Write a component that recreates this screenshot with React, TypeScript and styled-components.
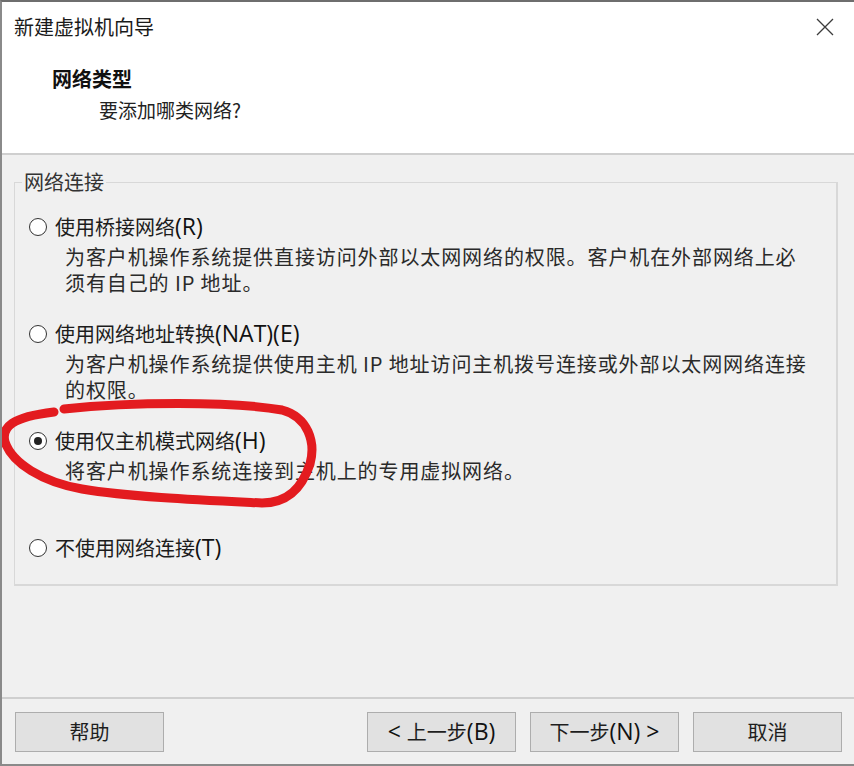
import styled, { createGlobalStyle } from 'styled-components';

type NetOption = {
  label: string;
  lines: string[];
  checked?: boolean;
};

const options: NetOption[] = [
  {
    label: '使用桥接网络(R)',
    lines: [
      '为客户机操作系统提供直接访问外部以太网网络的权限。客户机在外部网络上必',
      '须有自己的 IP 地址。',
    ],
  },
  {
    label: '使用网络地址转换(NAT)(E)',
    lines: [
      '为客户机操作系统提供使用主机 IP 地址访问主机拨号连接或外部以太网网络连接',
      '的权限。',
    ],
  },
  {
    label: '使用仅主机模式网络(H)',
    lines: ['将客户机操作系统连接到主机上的专用虚拟网络。'],
    checked: true,
  },
  { label: '不使用网络连接(T)', lines: [] },
];

// latin runs render a bit larger than the CJK glyphs (Segoe-like mix)
const mixed = (text: string) =>
  text.split(/([\x20-\x7e]+)/).map((part, i) =>
    /[\x20-\x7e]/.test(part) ? <Latin key={i}>{part}</Latin> : part
  );

const App = () => {
  return (
    <>
      <GlobalStyle />
      <Window>
        <Header>
          <TitleBar>
            <Title>新建虚拟机向导</Title>
            <CloseButton>
              <svg width="18" height="18" viewBox="0 0 18 18">
                <path d="M1 1 L17 17 M17 1 L1 17" stroke="#3c3c3c" strokeWidth="1.3" />
              </svg>
            </CloseButton>
          </TitleBar>
          <HeaderText>
            <Heading>网络类型</Heading>
            <SubHeading>要添加哪类网络?</SubHeading>
          </HeaderText>
        </Header>

        <Body>
          <Group>
            <Legend>网络连接</Legend>
            <OptionList>
              {options.map((opt) => (
                <Option key={opt.label}>
                  <OptionLabel>
                    <Radio $checked={!!opt.checked} />
                    <span>{mixed(opt.label)}</span>
                  </OptionLabel>
                  {opt.lines.length > 0 && (
                    <Description>
                      {opt.lines.map((line) => (
                        <DescLine key={line}>{line}</DescLine>
                      ))}
                    </Description>
                  )}
                </Option>
              ))}
            </OptionList>
          </Group>
        </Body>

        <Footer>
          <Button>帮助</Button>
          <Spacer />
          <Button>{mixed('< ')}上一步{mixed('(B)')}</Button>
          <Button>下一步{mixed('(N) >')}</Button>
          <Button>取消</Button>
        </Footer>

        <Annotation width="854" height="766" viewBox="0 0 854 766">
          <path
            d="M64 409 C 130 402, 230 401, 282 410 C 308 417, 316 442, 310 464 C 302 488, 288 503, 262 503 C 200 500, 130 497, 82 489 C 42 482, 12 463, 5 442 C 1 427, 12 417, 54 412"
            fill="none"
            stroke="#e31b1f"
            strokeWidth="9"
            strokeLinecap="round"
          />
        </Annotation>
      </Window>
    </>
  );
};

export default App;

const GlobalStyle = createGlobalStyle`
  body {
    margin: 0;
    background: #f0f0f0;
  }
  * {
    box-sizing: border-box;
  }
`;

const Window = styled.div`
  position: relative;
  display: flex;
  flex-direction: column;
  width: 854px;
  height: 766px;
  background: #f0f0f0;
  border-top: 2px solid #6e6e6e;
  border-left: 2px solid #8a8a8a;
  border-bottom: 2px solid #8a8a8a;
  font-family: "Noto Sans", "Noto Sans CJK SC", sans-serif;
  color: #1e1e1e;
  overflow: hidden;
`;

const Header = styled.div`
  height: 153px;
  background: #ffffff;
  border-bottom: 2px solid #cfcfcf;
`;

const TitleBar = styled.div`
  display: flex;
  align-items: center;
  justify-content: space-between;
  height: 50px;
  padding: 0 19px 0 12px;
`;

const Title = styled.div`
  font-family: "Noto Sans CJK SC", sans-serif;
  font-size: 20px;
  line-height: 30px;
  color: #1a1a1a;
`;

const CloseButton = styled.div`
  display: flex;
  align-items: center;
  justify-content: center;
  width: 20px;
  height: 20px;
`;

const HeaderText = styled.div`
  padding: 13px 0 0 50px;
`;

const Heading = styled.div`
  font-family: "Noto Sans CJK SC", sans-serif;
  font-size: 20px;
  font-weight: 700;
  line-height: 28px;
  color: #111;
`;

const SubHeading = styled.div`
  margin-top: 3px;
  padding-left: 47px;
  font-family: "Noto Sans CJK SC", sans-serif;
  font-size: 19px;
  line-height: 28px;
  color: #222;
`;

const Body = styled.div`
  flex: 1;
  padding: 14px 16px 0 12px;
`;

const Group = styled.fieldset`
  margin: 0;
  padding: 19px 16px 23px 14px;
  border: 1px solid #d8d8d8;
  border-right-width: 2px;
  border-bottom-width: 2px;
  border-radius: 0;
`;

const Legend = styled.legend`
  padding: 0 2px;
  margin-left: -7px;
  font-family: "Noto Sans CJK SC", sans-serif;
  font-size: 20px;
  line-height: 26px;
  color: #333;
`;

const OptionList = styled.div`
  display: grid;
  grid-template-rows: 107px 107px 107px auto;
`;

const Option = styled.div`
  display: flex;
  flex-direction: column;
`;

const OptionLabel = styled.div`
  display: flex;
  align-items: center;
  gap: 8px;
  height: 26px;
  font-family: "Noto Sans CJK SC", sans-serif;
  font-size: 20px;
  line-height: 26px;
  color: #1c1c1c;
  white-space: nowrap;
`;

const Latin = styled.span`
  font-family: "Open Sans", "Noto Sans", sans-serif;
  font-size: 23px;
  font-weight: 500;
  line-height: 1;
  color: #111;
`;

const Radio = styled.span<{ $checked: boolean }>`
  position: relative;
  flex: none;
  width: 18px;
  height: 18px;
  border: 1px solid #333;
  border-radius: 50%;
  background: #fff;

  &::after {
    content: '';
    display: ${(p) => (p.$checked ? 'block' : 'none')};
    position: absolute;
    top: 4px;
    left: 4px;
    width: 8px;
    height: 8px;
    border-radius: 50%;
    background: #222;
  }
`;

const Description = styled.div`
  display: flex;
  flex-direction: column;
  margin-top: 4px;
  padding-left: 36px;
`;

const DescLine = styled.div`
  height: 26px;
  font-family: "Noto Sans CJK SC", sans-serif;
  font-size: 20px;
  letter-spacing: 0.9px;
  line-height: 26px;
  color: #2a2a2a;
  white-space: nowrap;
`;

const Footer = styled.div`
  display: flex;
  align-items: flex-start;
  gap: 14px;
  height: 67px;
  padding: 13px 12px 0 13px;
  border-top: 2px solid #cfcfcf;
`;

const Spacer = styled.div`
  flex: 1;
`;

const Button = styled.button`
  width: 149px;
  height: 40px;
  padding: 0;
  background: #e1e1e1;
  border: 1px solid #adadad;
  border-radius: 0;
  font-family: "Noto Sans CJK SC", sans-serif;
  font-size: 20px;
  line-height: 38px;
  color: #1e1e1e;
`;

const Annotation = styled.svg`
  position: absolute;
  top: -2px;
  left: -2px;
  pointer-events: none;
`;
